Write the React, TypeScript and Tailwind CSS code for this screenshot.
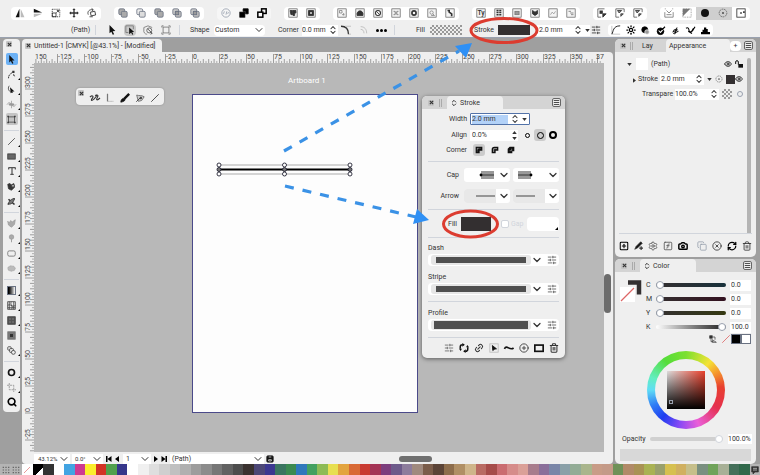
import type { ReactNode } from "react";
import { Camera, ChevronDown, ChevronsUpDown, CirclePlus, CircleX, Copy, Eye, Link2, Menu, RefreshCw, Search, Settings, SlidersHorizontal, SquareFunction, SquarePlus, Sun, Trash2, Type } from "lucide-react";

type IconProps = { name: string; className?: string };

const FRAME = <rect x="1" y="1" width="10" height="10" fill="#f4f4f4" strokeWidth="0.8" stroke="#555" />;

// Small glyphs, all on a 12 x 12 grid
const GLYPHS: Record<string, ReactNode> = {
  flipH: (<><path d="M5.3 1v10H.8z" fill="#111" stroke="none" /><path d="M6.8 1v10h4.5z" fill="#bbb" stroke="none" /></>),
  flipV: (<><path d="M1 1v4.5h10z" fill="#111" stroke="none" /><path d="M1 11V7h10z" fill="#bbb" stroke="none" /></>),
  scale: (<><rect x="1.5" y="1.5" width="9" height="9" strokeDasharray="1.5 1" /><rect x="1.5" y="6" width="4.5" height="4.5" /><path d="M6.5 5.5 9 3M7 3h2v2" /></>),
  move: (<><path d="M6 1v10M1 6h10" strokeWidth="1.6" /><path d="m4 2.5 2-2 2 2M4 9.5l2 2 2-2M2.5 4l-2 2 2 2M9.5 4l2 2-2 2" fill="currentColor" stroke="none" /></>),
  rotate: (<><rect x="4.5" y="4.5" width="5.5" height="4.5" transform="rotate(-12 7 7)" /><path d="M1.5 8C0 4 3 1.5 7 2M5.5 .5 7.5 2 6 4M3 10.5h4" /></>),
  unite: (<><rect x="1" y="1" width="7" height="7" rx="1.5" fill="#aaa" /><rect x="4" y="4" width="7" height="7" rx="1.5" fill="#aaa" /></>),
  subtract: (<><rect x="1" y="1" width="7" height="7" rx="1.5" fill="#eee" /><rect x="4" y="4" width="7" height="7" rx="1.5" fill="#ddd" /></>),
  intersect: (<><rect x="1" y="1" width="7" height="7" rx="1.5" fill="#ccc" /><rect x="4" y="4" width="7" height="7" rx="1.5" fill="#bbb" /><rect x="4" y="4" width="4" height="4" fill="#999" /></>),
  ring: (<><circle cx="6" cy="6" r="5" /><path d="m3 7 1-3M6 8l1-4M8 7l1-2" /></>),
  front: (<><path d="M5 1h6v6H8V4H5z" fill="currentColor" /><rect x="1" y="5" width="6" height="6" fill="currentColor" /></>),
  back: (<><rect x="5.5" y="1" width="5.5" height="5.5" strokeWidth="1.8" /><rect x="1" y="5" width="6" height="6" fill="#fff" strokeWidth="1.8" /></>),
  frameFlag: (<>{FRAME}<path d="M2.5 3h3v5h-2zM6 3h3.5v3H8v3H6z" fill="currentColor" /></>),
  frameDown: (<>{FRAME}<path d="M3 3h6v6H3z" fill="currentColor" /><path d="M5 5h2v2H5z" fill="#fff" stroke="none" /></>),
  frameGrid: (<>{FRAME}<path d="M3 3h3v3H3zM6 8h3M8 6v3" stroke="#888" /></>),
  frameCar: (<>{FRAME}<path d="M2.5 9V6l2-2.5h3l2 2.5v3z" fill="currentColor" /></>),
  frameBan: (<>{FRAME}<circle cx="6" cy="6" r="3" strokeWidth="1.3" /><path d="m4 4 4 4" /></>),
  frameAlign: (<>{FRAME}<path d="M3 4h2v4H3M9 4H7v4h2M5 6h2" stroke="#777" /></>),
  frameRing: (<>{FRAME}<circle cx="6" cy="6" r="2.5" strokeWidth="2" /></>),
  frameLoop: (<>{FRAME}<circle cx="5.5" cy="5.5" r="2" stroke="#888" /><path d="M7 7l2 2H5" stroke="#888" /></>),
  frameSteps: (<>{FRAME}<path d="M3 3h2v2l3 2v2h1" strokeWidth="2" /></>),
  frameTy: FRAME,
  frameText: (<>{FRAME}<path d="M3 3h6M3 5.5h6M3 8h6" strokeWidth="1.8" strokeDasharray="2.5 .8" /></>),
  frameBox: (<>{FRAME}<rect x="3.5" y="4" width="5" height="4" fill="#999" stroke="#777" /></>),
  frameMask: (<>{FRAME}<path d="M3 3l3 2 3-2v4L6 9 3 7z" fill="currentColor" /></>),
  frameLight: (<>{FRAME}<path d="M3 8l2-3 2 2 2-3" stroke="#999" /></>),
  frameBars: (<>{FRAME}<path d="M3 4h3M5 6h4M6 8h3" stroke="#777" /></>),
  frameDot: (<><path d="M9 1H1v10h4" strokeWidth=".8" /><rect x="3" y="3" width="4" height="4" fill="currentColor" stroke="none" /><path d="M7 7h4L7 11z" fill="currentColor" /></>),
  frameTri: (<><path d="M11 5V1H1v10h4" strokeWidth=".8" /><path d="M3 3h5L5 6zM7 7h3L7 10z" fill="#888" /></>),
  smile: (<><path d="M1 1h1M10 1h1M1 11h10V5M1 5v6" stroke="#777" /><path d="M3 3l3 3 3-3M3 8h6" stroke="#777" /></>),
  half: (<><rect x="1" y="1" width="10" height="10" strokeDasharray="1 1" stroke="#888" /><path d="M10 1 1 10V1z" fill="#777" stroke="none" /></>),
  disc: <circle cx="6" cy="6" r="4.8" fill="#111" stroke="none" />,
  target: (<><circle cx="6" cy="6" r="4.6" stroke="#666" strokeDasharray="2 .8" /><circle cx="6" cy="6" r="1.3" fill="#555" stroke="none" /></>),
  frameEnd: (<><rect x="1" y="1" width="10" height="10" /><path d="M5 5h2v2H5zM8.5 4h2v2h-2z" fill="currentColor" stroke="none" /></>),
  pointer: <path d="M3 0l7 7.2-3.2.2 1.8 3.6-1.7.8-1.7-3.8L3 10z" fill="#111" stroke="none" />,
  pointerBox: (<><path d="M4 9H1V1h9v4" stroke="#777" /><path d="M5 3l6 5.5H8.6l1.3 2.6-1.2.6-1.3-2.8L5 11z" fill="#111" stroke="none" /></>),
  pointerCircle: (<><path d="M1 3l5-2 5 2M1 3v5c1 3 3 3 4 3" stroke="#777" /><circle cx="7.5" cy="6.5" r="3" stroke="#555" /><path d="M6 5l5 5-2 1" /></>),
  boundBox: (<><rect x="2.5" y="2.5" width="7" height="7" stroke="#777" /><path d="M1 1h2M9 1h2M1 11h2M9 11h2M1 1v2M11 1v2M1 9v2M11 9v2" stroke="#777" /></>),
  arc: (<><path d="M0 1.5c6 0 9 3 9 9.5" strokeWidth="1.6" /><path d="M5 1.5h7M9 11h3" stroke="#bbb" /></>),
  arcs: (<><path d="M1 1c6 0 9 4 9 10M1 5c3 0 5 2 5 6" stroke="#aaa" /></>),
  curve: (<><path d="M1 1v10h10" stroke="#bbb" /><path d="M1 11C3 8 2 1 11 1" /></>),
  bulb: (<><circle cx="5" cy="5" r="4" fill="currentColor" /><circle cx="8" cy="8" r="3" fill="#999" stroke="#eee" /></>),
  dial: (<><circle cx="6" cy="7" r="4.5" fill="currentColor" /><path d="M3.5 6l2.5 2.5 6-7" stroke="#fff" strokeWidth="1.4" /><path d="m8 5 4-4" strokeWidth="1.5" /></>),
  hash: <path d="m2 8 7-3M3 10l7-3M5 11l3-9M3 6l4-2" strokeWidth="1.3" />,
  quill: <path d="M0 3c3-2 4 1 4 3s3 3 5 0l3-5M3 7l5 3M7 8l3-5" strokeWidth="1.5" />,
  hills: <path d="M0 11V8h2V5h2V2h3v2h2v4h3v3z" fill="currentColor" stroke="none" />,
  node: (<><path d="M2 11c0-4 2-6 6-8" strokeDasharray="2 .6" strokeWidth="1.3" /><path d="M7 1h3v3H7zM9 5l2 4-3-2z" fill="currentColor" stroke="none" /></>),
  nodeCurve: (<><path d="M3 1C0 5 3 10 8 10" /><path d="M4 3l6 5.5H7.5L5 11z" fill="#111" stroke="none" /></>),
  warp: (<><path d="M0 6c2-3 4-3 6 0s4 3 6 0" stroke="#888" /><ellipse cx="6" cy="6" rx="4" ry="1.8" fill="#999" stroke="none" /><path d="M6 1v10" stroke="#999" /></>),
  artboard: (<><rect x="2" y="2.5" width="8" height="7" strokeWidth="1.2" stroke="#555" /><path d="M.5 1h2v2h-2zM9.5 1h2v2h-2zM.5 9h2v2h-2zM9.5 9h2v2h-2z" fill="#333" stroke="none" /></>),
  line: <path d="M1.5 10.5l9-9" />,
  rect: <rect x="1" y="2.5" width="10" height="7" fill="#666" />,
  shape: (<><path d="M1 3l3-1 2 2 3-2 1 5-4 4-4-2z" fill="#333" /><circle cx="8" cy="5" r="2" fill="#aaa" /></>),
  cross: (<><path d="M1 10l9-8M2 3l8 7" strokeWidth="2.2" /><path d="M2 9c3 2 7-2 8-7-4 0-8 4-8 7" fill="#777" /></>),
  cloud: <path d="M1 3l2 2 2-3 2 2 4-3-1 6-4 4-4-3z" fill="#aaa" stroke="#999" />,
  pin: (<><circle cx="6" cy="4" r="3" fill="#aaa" stroke="#999" /><path d="M6 7v4" stroke="#888" /></>),
  roundBox: <rect x="1" y="2.5" width="10" height="7" rx="2" stroke="#666" />,
  blob: <ellipse cx="6" cy="6" rx="5" ry="3.6" fill="#bbb" stroke="#999" strokeDasharray="1 1" />,
  mesh: (<><rect x="1" y="1" width="10" height="10" /><path d="M1 6c3-3 6 3 10 0M6 1c-3 3 3 6 0 10M3 1v10M9 1v10M1 9h10" /></>),
  tile: (<><rect x="1" y="1" width="10" height="10" fill="#555" /><path d="M3 3h2v2H3zM7 3h2v2H7zM3 7h2v2H3zM7 7h2v2H7z" fill="#777" stroke="none" /></>),
  tileDot: (<><rect x="1" y="1" width="10" height="10" fill="#777" stroke="#777" /><path d="M4 4h4v4H4z" fill="#333" stroke="none" /></>),
  blend: (<><rect x="1" y="1" width="4.5" height="4.5" rx="1" /><rect x="3.5" y="3.5" width="5" height="5" rx="1" fill="#eee" /><circle cx="8.5" cy="8.5" r="2.6" fill="#eee" /></>),
  lens: <circle cx="6" cy="6" r="4" strokeWidth="2.2" stroke="#111" />,
  crop: <path d="M3 0v9h9M0 3h9v9" stroke="#888" strokeDasharray="3 1" />,
  scribble: <path d="M0 5c2-3 5-1 3 1s-2 4 1 2 3-5 5-5-2 4-1 5 3-1 4-2M6 3l3-1" strokeWidth="1.3" />,
  penLine: (<><path d="M3 1v9h7" stroke="#999" strokeDasharray="1.5 1" /><path d="M3 1v9" strokeWidth="1.5" stroke="#777" /></>),
  brush: (<><path d="M11 1 5 7" strokeWidth="2.8" stroke="#111" /><path d="M1 11c0-3 2-5 4-4s1 3-4 4" fill="#111" stroke="#111" /></>),
  pen: (<><path d="M2 2.5c3 1 6 0 9 2L8 9l-4 1z" fill="#ccc" stroke="#666" /><path d="M1.5 10.5 6 6" /><circle cx="7" cy="6" r="1" fill="#333" /></>),
  dotsGrid: <path d="M1 2h2M5 2h2M9 2h2M1 6h2M5 6h2M9 6h2M1 10h2M5 10h2M9 10h2" strokeWidth="1.8" />,
  cornerMiter: (<><path d="M1 1h10v6H7v4H1z" fill="#111" stroke="none" /><path d="M3 3.5h6M3.5 3v6" stroke="#ccc" strokeDasharray="1 1" /></>),
  cornerRound: (<><path d="M1 11V5q0-4 4-4h6v6H7v4z" fill="#111" stroke="none" /><path d="M4 9V4h5" stroke="#ddd" /></>),
  cornerBevel: (<><path d="M1 11V4l3-3h7v7H8v3z" fill="#111" stroke="none" /><path d="M4 7h3V4" stroke="#999" /></>),
  cursorBox: (<><rect x="1" y="1" width="10" height="10" stroke="#bbb" /><path d="M4 3l5 4-2 .3L4.5 9z" fill="#111" stroke="#111" /></>),
  wave: <path d="M.5 7c3-6 6 3 11-1" strokeWidth="2" stroke="#111" />,
  box: <rect x="1" y="2.5" width="10" height="7.5" strokeWidth="2" stroke="#111" />,
  pencilPlus: (<><path d="M1 11l2-4 6-6 2 2-6 6z" fill="#111" /><path d="M9.5 7v5M7 9.5h5" strokeWidth="1.6" /></>),
  refresh: (<><path d="M1.5 7V4.500q0-2.500 3-2.500M10.500 5v2.500q0 2.500-3 2.500" strokeWidth="1.800" stroke="#111" /><path d="M4 0l3 2-3 2.500zM8 7.500v4.500L5 10zM0 7h3.500L2 9.500zM8.500 5h3.500l-2-2.500z" fill="#111" stroke="none" /></>),
  swap: (<><path d="M1 1h4v4H1z" fill="currentColor" /><path d="M3 6v4h4M6 3h3v4M5 7l6 4H5z" /></>),
  chat: (<><path d="M1 1h10v8H6l-3 3V9H1z" fill="#333" /><path d="M3 3.5h6M3 6h6" stroke="#ddd" /></>),
  disk: (<><rect x="1" y="1" width="10" height="10" rx="2" fill="#111" /><path d="M4 3h4M4 7h4v2H4z" stroke="#fff" /></>),
  unlock: (<><path d="M1 6V3q0-2 2-2t2 2v4" strokeWidth="1.5" stroke="#111" /><rect x="5" y="6" width="7" height="5.5" fill="#111" stroke="none" /></>),
};

function Glyph({ name, className = "size-2.5" }: IconProps) {
  return (
    <svg viewBox="0 0 12 12" className={`shrink-0 overflow-visible ${className}`} fill="none" stroke="currentColor" strokeWidth="1">
      {GLYPHS[name]}
      {name === "frameTy" && (
        <text x="6" y="8.8" textAnchor="middle" fontSize="8" fontWeight="600" fill="#333" stroke="none">Ty</text>
      )}
    </svg>
  );
}

const TOP_GROUPS = [
  ["flipH", "flipV", "scale", "move", "rotate"],
  ["unite", "subtract", "unite", "intersect", "intersect"],
  ["ring", "front", "back"],
  ["frameFlag", "frameDown"],
  ["frameGrid", "frameCar", "frameBan", "frameAlign", "frameRing", "frameLoop", "frameSteps"],
  ["frameTy", "frameText", "frameBox", "frameMask", "frameLight", "frameBars"],
  ["frameDot", "frameTri", "frameTri"],
  ["smile", "half", "disc", "target", "frameEnd"],
];

function IconButton({ name, className = "", icon }: IconProps & { icon?: string }) {
  return (
    <button type="button" aria-label={name} className={`flex shrink-0 items-center justify-center ${className}`}>
      <Glyph name={name} className={icon} />
    </button>
  );
}

function TopBar() {
  return (
    <div className="flex h-6 items-center gap-[13px] pt-0.5 pl-[11px]">
      {TOP_GROUPS.map((group, g) => (
        <div key={g} className={`flex shrink-0 overflow-hidden rounded-sm ${g === 1 ? "bg-white text-gray-500" : g === 2 ? "bg-[#f6f6f6]" : "bg-white"}`}>
          {group.map((name, i) => (
            <IconButton
              key={i}
              name={name}
              className={`h-[13px] w-[18px] ${name === "disc" || name === "target" ? "bg-[#cfcfcf]" : ""} ${name === "ring" ? "text-gray-400" : ""} ${name === "front" || name === "back" ? "text-black" : ""}`}
            />
          ))}
        </div>
      ))}
    </div>
  );
}

function Steppers() {
  return <ChevronsUpDown className="size-2.5 shrink-0" strokeWidth={2.5} />;
}

function Caret() {
  return (
    <svg viewBox="0 0 6 4" className="h-[3px] w-[5px] shrink-0" fill="currentColor">
      <path d="M0 0h6L3 4z" />
    </svg>
  );
}

function Checker({ className = "" }: { className?: string }) {
  return (
    <div className={`bg-[repeating-conic-gradient(#999_0_25%,#eee_0_50%)] bg-[length:4px_4px] ${className}`} />
  );
}

const input = "min-w-0 bg-white outline-none";

function PropertyBar() {
  return (
    <div className="flex h-3 items-center pl-[71px]">
      <span className="w-[18px] shrink-0">(Path)</span>
      <i className="ml-1.5 h-2.5 w-px bg-gray-300" />
      <div className="ml-[7px] flex shrink-0">
        <IconButton name="pointer" className="h-3 w-[18px]" />
        <IconButton name="pointerBox" className="mx-[3px] h-3 w-3 rounded-sm bg-[#c8c8c8]" />
        <IconButton name="pointerCircle" className="h-3 w-[18px]" />
        <IconButton name="boundBox" className="h-3 w-[18px]" />
      </div>
      <i className="ml-1 h-2.5 w-px bg-gray-300" />
      <label className="ml-[10px] w-6 shrink-0" htmlFor="shape">Shape</label>
      <div className="flex h-[11px] w-[51px] shrink-0 items-center justify-between rounded-sm bg-white pl-px">
        <select id="shape" className="appearance-none bg-transparent outline-none"><option>Custom</option></select>
        <ChevronDown className="size-3" />
      </div>
      <label className="ml-[13px] w-6 shrink-0" htmlFor="corner">Corner</label>
      <div className="flex h-[11px] w-[36px] shrink-0 items-center bg-white">
        <input id="corner" className={`${input} w-[26px]`} defaultValue="0.0 mm" />
        <Steppers />
      </div>
      <IconButton name="arc" className="ml-0.5 h-3 w-3" />
      <IconButton name="arcs" className="ml-[6px] h-3 w-3" icon="size-2" />
      <button type="button" aria-label="More" className="ml-1 flex h-3 w-[14px] items-center justify-center gap-px">
        <i className="size-[3px] rounded-full bg-black" />
        <i className="size-[3px] rounded-full bg-black" />
        <i className="size-[3px] rounded-full bg-black" />
      </button>
      <i className="ml-[6px] h-2.5 w-px bg-gray-300" />
      <span className="ml-[21px] w-[14px] shrink-0">Fill</span>
      <Checker className="h-[10px] w-8 shrink-0" />
      <span className="ml-[12px] w-6 shrink-0">Stroke</span>
      <button type="button" aria-label="Stroke color" className="h-[10px] w-8 shrink-0 bg-[#332f30]" />
      <div className="ml-[7px] flex h-[11px] w-[53px] shrink-0 items-center gap-0.5 bg-white pl-0.5">
        <input aria-label="Stroke width" className={`${input} w-8`} defaultValue="2.0 mm" />
        <Steppers />
        <Caret />
      </div>
      <SlidersHorizontal className="ml-px size-[10px] shrink-0" />
      <div className="ml-[7px] flex shrink-0 rounded-sm bg-white text-black">
        <IconButton name="curve" className="h-3 w-[15px]" icon="size-2.5" />
        <button type="button" aria-label="Brightness" className="flex h-3 w-[15px] items-center justify-center"><Sun className="size-2.5" strokeWidth={3} /></button>
        {["bulb", "dial", "hash", "quill", "hills"].map((n) => (
          <IconButton key={n} name={n} className="h-3 w-[15px]" icon="size-[9px]" />
        ))}
      </div>
    </div>
  );
}

const TOOLS = [
  ["pointer", "node", "nodeCurve", "warp", "artboard"],
  ["line", "rect", "type", "shape", "cross"],
  ["cloud", "pin", "roundBox", "blob"],
  ["gradient", "mesh", "tile", "tileDot", "blend"],
  ["lens", "crop", "search"],
];

function Close() {
  return (
    <button type="button" aria-label="Close" className="flex size-[6px] shrink-0 items-center justify-center rounded-[1px] bg-[#c4c4c4] text-[#333]">
      <svg viewBox="0 0 6 6" className="size-[5px]" stroke="currentColor" strokeWidth="1.3"><path d="m1 1 4 4M5 1 1 5" /></svg>
    </button>
  );
}

function ToolPalette() {
  return (
    <aside className="flex w-[17px] shrink-0 flex-col self-start rounded-[4px] bg-[#efefef] pb-1">
      <div className="flex h-[14px] items-start pt-0.5 pl-[3px]"><Close /></div>
      {TOOLS.map((group, g) => (
        <div key={g} className={`mx-px flex flex-col items-center gap-[3px] ${g > 0 ? "mt-[5px] border-t border-gray-300 pt-[4px]" : ""}`}>
          {group.map((name) => (
            <button
              key={name}
              type="button"
              aria-label={name}
              className={`relative flex h-3 w-3 items-center justify-center rounded-[2px] ${name === "pointer" ? "bg-[#6cb1f5]" : name === "artboard" ? "bg-[#c4c4c4]" : ""}`}
            >
              {name === "type" && <Type className="size-2.5 text-[#555]" strokeWidth={3} />}
              {name === "search" && <Search className="size-2.5 text-black" strokeWidth={4} />}
              {name === "gradient" && <i className="size-[9px] border border-gray-500 bg-linear-to-r from-black to-white" />}
              {GLYPHS[name] && <Glyph name={name} className="size-[9px]" />}
              {name !== "pointer" && name !== "search" && name !== "tileDot" && name !== "artboard" && (
                <i className="absolute -right-0.5 bottom-0 border-b-2 border-l-2 border-b-black border-l-transparent" />
              )}
            </button>
          ))}
        </div>
      ))}
    </aside>
  );
}

const SCALE = 1.08;
const range = (from: number, to: number) => Array.from({ length: to - from + 1 }, (_, i) => from + i);

function HorizontalRuler() {
  return (
    <svg className="ml-[12px] h-[11px] w-[572px] shrink-0" fontSize="7" fill="#444" role="img" aria-label="Horizontal ruler">
      {range(-29, 75).map((n) => (
        <line key={n} x1={158.5 + n * 5 * SCALE} x2={158.5 + n * 5 * SCALE} y1={n % 5 === 0 ? 2 : 7} y2="11" stroke="#888" strokeWidth="0.8" />
      ))}
      {range(-29, 75).map((n) => (
        <line key={n} x1={161.2 + n * 5 * SCALE} x2={161.2 + n * 5 * SCALE} y1="9" y2="11" stroke="#999" strokeWidth="0.8" />
      ))}
      {range(-6, 15).map((n) => (
        <text key={n} x={n === -6 ? 1 : n === 15 ? 562 : 159 + n * 25 * SCALE} y="7">{n === -6 ? "150" : n === 15 ? "37" : n * 25}</text>
      ))}
    </svg>
  );
}

function VerticalRuler() {
  return (
    <svg className="h-[390px] w-[12px] shrink-0" fontSize="7" fill="#444" role="img" aria-label="Vertical ruler">
      {range(-7, 64).map((n) => (
        <line key={n} y1={350 - n * 5 * SCALE} y2={350 - n * 5 * SCALE} x1={n % 5 === 0 ? 3 : 8} x2="12" stroke="#888" strokeWidth="0.8" />
      ))}
      {range(-7, 64).map((n) => (
        <line key={n} y1={347.3 - n * 5 * SCALE} y2={347.3 - n * 5 * SCALE} x1="10" x2="12" stroke="#999" strokeWidth="0.8" />
      ))}
      {range(-1, 12).map((n) => (
        <text key={n} transform={`translate(8 ${349 - n * 25 * SCALE}) rotate(-90)`}>{n * 25}</text>
      ))}
    </svg>
  );
}

function MenuButton() {
  return (
    <button type="button" aria-label="Panel menu" className="flex size-[9px] shrink-0 items-center justify-center rounded-[2px] border border-[#666] bg-[#efefef]">
      <Menu className="size-[7px]" strokeWidth={3} />
    </button>
  );
}

function Grip() {
  return <i className="h-2 w-[3px] shrink-0 border-x border-[#aaa]" />;
}

function PanelTitle({ title }: { title: string }) {
  return (
    <div className="flex h-[13px] shrink-0 items-center gap-[5px] bg-[#d4d4d4] pr-1 pl-[6px]">
      <Close />
      <Grip />
      <div className="flex h-full w-[56px] items-center gap-0.5 rounded-t-[4px] bg-[#efefef] pl-[3px]">
        <ChevronsUpDown className="size-2" strokeWidth={3} />
        <span>{title}</span>
      </div>
      <div className="ml-auto flex"><MenuButton /></div>
    </div>
  );
}

function ProfileRow({ label, wide }: { label: string; wide?: boolean }) {
  return (
    <div className="flex flex-col gap-px">
      <span className="h-[10px] leading-[10px]">{label}</span>
      <div className="flex h-[12px] items-center rounded-sm bg-white pr-0.5 pl-[3px]">
        <div className={`flex h-[10px] w-[100px] items-center rounded-[3px] bg-[#e6e6e6] ${wide ? "px-[3px]" : "px-[5px]"}`}>
          <i className={`w-full bg-[#4f4f4f] ${wide ? "h-[8px]" : "h-[6px]"}`} />
        </div>
        <ChevronDown className="size-3" strokeWidth={2.5} />
        <SlidersHorizontal className="ml-auto size-2.5 text-[#555]" />
      </div>
    </div>
  );
}

function LineSelect({ kind, label }: { kind: "capStart" | "capEnd" | "arrow" | "arrowEnd"; label: string }) {
  const cap = kind === "capStart" || kind === "capEnd";
  return (
    <button type="button" aria-label={label} className="flex h-[14px] w-[46px] items-center justify-between overflow-hidden rounded-[3px] bg-white">
      <svg viewBox="0 0 32 14" className="h-[14px] w-8">
        {cap ? (
          <>
            <rect x={kind === "capStart" ? 17 : 5} y="3" width="13" height="8" fill="#999" />
            <path d={kind === "capStart" ? "M17 7h13" : "M5 7h13"} stroke="#333" />
            <circle cx={kind === "capStart" ? 17 : 18} cy="7" r="1.4" />
          </>
        ) : (
          <>
            <rect width="32" height="14" fill="#e8e8e8" />
            <path d={kind === "arrow" ? "M12 7h19" : "M3 7h19"} stroke="#444" strokeWidth="1.2" />
          </>
        )}
      </svg>
      <ChevronDown className="size-3" strokeWidth={2.5} />
    </button>
  );
}

function StrokePanel() {
  const label = "w-[42px] shrink-0 pr-[3px] text-right";
  return (
    <section className="absolute top-[33px] left-[388px] w-[143px] overflow-hidden rounded-[5px] bg-[#efefef] shadow-[0_1px_4px_rgba(0,0,0,0.5)]">
      <PanelTitle title="Stroke" />
      <div className="flex flex-col px-[6px]">
        <div className="mt-[4px] flex h-3 items-center">
          <label htmlFor="width" className={label}>Width</label>
          <div className="flex h-3 w-[60px] items-center gap-0.5 rounded-[1px] border border-[#5272a8] bg-white pr-0.5 pl-px">
            <input id="width" className="h-[9px] w-10 min-w-0 bg-[#b3d2f8] outline-none" defaultValue="2.0 mm" />
            <Steppers />
            <Caret />
          </div>
        </div>
        <div className="mt-[4px] flex h-3 items-center">
          <label htmlFor="align" className={label}>Align</label>
          <div className="mr-[3px] flex h-[11px] w-[48px] items-center bg-white pl-0.5">
            <input id="align" className={`${input} w-10`} defaultValue="0.0%" />
            <span className="flex flex-col gap-[3px]"><span className="rotate-180"><Caret /></span><Caret /></span>
          </div>
          <button type="button" aria-label="Inside" className="flex size-3 items-center justify-center"><i className="size-[5px] rounded-full border border-black" /></button>
          <button type="button" aria-label="Center" className="mx-px flex size-3 items-center justify-center rounded-[3px] bg-[#ccc]"><i className="size-[7px] rounded-full border border-black" /></button>
          <button type="button" aria-label="Outside" className="flex size-3 items-center justify-center"><i className="size-2 rounded-full border-2 border-black" /></button>
        </div>
        <div className="mt-[3px] flex h-3 items-center">
          <span className={label}>Corner</span>
          <IconButton name="cornerMiter" className="ml-[3px] size-3 rounded-[3px] bg-[#ccc]" icon="size-2" />
          <IconButton name="cornerRound" className="ml-[4px] size-3" icon="size-2" />
          <IconButton name="cornerBevel" className="ml-[4px] size-3" icon="size-2" />
        </div>
        <hr className="mt-[5px] border-gray-300" />
        <div className="mt-[6px] flex h-[14px] items-center gap-[3px]">
          <span className="w-[33px] shrink-0 pr-0.5 text-right">Cap</span>
          <LineSelect kind="capStart" label="Start cap" />
          <LineSelect kind="capEnd" label="End cap" />
        </div>
        <div className="mt-[7px] flex h-[14px] items-center gap-[3px]">
          <span className="w-[33px] shrink-0 pr-0.5 text-right">Arrow</span>
          <LineSelect kind="arrow" label="Start arrow" />
          <LineSelect kind="arrowEnd" label="End arrow" />
        </div>
        <hr className="mt-[6px] border-gray-300" />
        <div className="mt-[7px] flex h-[14px] items-center">
          <span className="w-[33px] shrink-0 pr-1 text-right">Fill</span>
          <button type="button" aria-label="Stroke fill" className="h-[14px] w-[30px] bg-[#332f30]" />
          <label className="ml-[10px] flex items-center gap-0.5 text-gray-300">
            <input type="checkbox" className="size-2 appearance-none rounded-[2px] border border-gray-300 bg-white" />Gap
          </label>
          <div className="ml-auto flex h-[14px] w-8 items-end justify-end rounded-sm bg-white"><i className="mr-px mb-px border-b-[3px] border-l-[3px] border-b-black border-l-transparent" /></div>
        </div>
        <hr className="mt-[6px] mb-[5px] border-gray-300" />
        <ProfileRow label="Dash" />
        <div className="h-[6px]" />
        <ProfileRow label="Stripe" />
        <hr className="my-[6px] border-gray-300" />
        <ProfileRow label="Profile" wide />
        <hr className="mt-[6px] border-gray-300" />
        <div className="flex h-[20px] items-center justify-end gap-[5px]">
          <SlidersHorizontal className="size-2.5 text-[#666]" />
          <Glyph name="refresh" />
          <Link2 className="size-2.5 -rotate-45" strokeWidth={2.5} />
          <Glyph name="cursorBox" />
          <Glyph name="wave" />
          <CirclePlus className="size-2.5" />
          <Glyph name="box" />
          <Trash2 className="size-2.5" strokeWidth={2.5} />
        </div>
      </div>
    </section>
  );
}

function Canvas() {
  return (
    <div className="relative min-w-0 flex-1 overflow-hidden bg-[#b8b8b8]">
      <span className="absolute top-[12px] left-[254px] text-[8px] leading-3 text-white">Artboard 1</span>
      <div className="absolute top-[31px] left-[158px] h-[319px] w-[226px] border border-[#4b4a8a] bg-[#fdfdfd]">
        <svg viewBox="0 0 142 20" className="ml-[20px] mt-[64px] h-5 w-[142px]" fill="none" stroke="#223" strokeWidth="0.9">
          <path d="M6 6h131M6 15h131" stroke="#777" strokeWidth="0.6" />
          <path d="M6 10.5h131" stroke="#000" strokeWidth="2" />
          {[6, 71.5, 137].map((x) => [6, 10.5, 15].map((y) => (
            <circle key={`${x}-${y}`} cx={x} cy={y} r="2" fill={y === 10.5 ? "#777" : "#fff"} />
          )))}
        </svg>
      </div>
      <div className="absolute top-[25px] left-[42px] flex h-[17px] w-[88px] rounded-[4px] bg-[#efefef] pt-0.5 pl-0.5 shadow-[0_0_2px_#888]">
        <Close />
        <div className="flex items-center gap-[5px] pl-[6px]">
          {["scribble", "penLine", "brush", "pen", "line"].map((n) => <Glyph key={n} name={n} className="size-[10px]" />)}
        </div>
      </div>
      <StrokePanel />
    </div>
  );
}

function StatusBar() {
  return (
    <div className="flex h-3 items-center pt-px pl-3">
      <div className="flex h-[10px] w-[36px] shrink-0 items-center justify-between bg-white pl-1 text-[6px]"><span>43.12%</span><ChevronDown className="size-3" /></div>
      <div className="ml-0.5 flex h-[10px] w-[31px] shrink-0 items-center justify-between bg-white pl-[3px] text-[6px]"><span>0.0°</span><ChevronDown className="size-3" /></div>
      <svg viewBox="0 0 14 6" className="ml-[3px] h-[6px] w-[14px] shrink-0"><path d="M0 0h1.5v6H0zM5.5 0v6L1.5 3zM13 0v6L9 3z" /></svg>
      <div className="ml-[3px] flex h-[10px] w-7 shrink-0 items-center justify-between bg-white pl-[3px]"><span>1</span><ChevronDown className="size-3" /></div>
      <svg viewBox="0 0 14 6" className="ml-0.5 h-[6px] w-[14px] shrink-0"><path d="M1 0v6l4-3zM8.5 0v6l4-3zM12.5 0H14v6h-1.5z" /></svg>
      <div className="ml-[3px] flex h-[10px] w-[94px] shrink-0 items-center justify-between bg-white pl-0.5"><span>(Path)</span><ChevronDown className="size-3" /></div>
      <Glyph name="disk" className="ml-0.5 size-2" />
      <div className="ml-[125px] h-[6px] w-[33px] shrink-0 rounded-full bg-[#707070]" />
    </div>
  );
}

function DocumentWindow() {
  return (
    <main className="flex min-w-0 flex-1 flex-col">
      <div className="flex h-[13px] w-[140px] items-center gap-[3px] rounded-t-[4px] bg-[#efefef] pl-[3px] whitespace-nowrap">
        <Close />
        <span>Untitled-1 [CMYK] [@43.1%] - [Modified]</span>
      </div>
      <div className="flex min-h-0 flex-1 flex-col rounded-b-[4px] rounded-tr-[4px] bg-[#efefef]">
        <HorizontalRuler />
        <div className="flex min-h-0 flex-1 overflow-hidden">
          <VerticalRuler />
          <Canvas />
          <div className="w-[9px] shrink-0 pt-[211px]"><i className="block h-[39px] w-[7px] rounded-full bg-[#6c6c6c]" /></div>
        </div>
        <StatusBar />
      </div>
    </main>
  );
}

function AppearancePanel() {
  return (
    <section className="flex h-[218px] shrink-0 flex-col overflow-hidden rounded-[5px] bg-[#efefef]">
      <div className="flex h-[13px] shrink-0 items-center bg-[#d4d4d4] pr-[3px] pl-[5px]">
        <Close />
        <i className="ml-[4px]" /><Grip />
        <span className="ml-[9px] w-6">Lay</span>
        <div className="flex h-full w-[64px] items-center justify-start rounded-t-[4px] bg-[#efefef] pl-[3px]">Appearance</div>
        <button type="button" aria-label="Add tab" className="ml-auto flex h-[10px] w-[11px] items-center justify-center rounded-sm bg-white">+</button>
        <i className="w-[3px]" />
        <MenuButton />
      </div>
      <div className="flex min-h-0 flex-1 pt-[6px]">
        <div className="flex flex-1 flex-col gap-[3px] pl-3">
          <div className="flex h-3 items-center">
            <Caret />
            <i className="ml-[4px] size-3 bg-white" />
            <span className="ml-[3px]">(Path)</span>
            <Eye className="mr-px ml-auto size-2" strokeWidth={3} />
            <Glyph name="unlock" className="ml-0.5 size-2" />
          </div>
          <div className="flex h-3 items-center">
            <span className="ml-[4px] w-[7px] -rotate-90"><Caret /></span>
            <label htmlFor="app-stroke" className="w-[21px]">Stroke</label>
            <div className="ml-px flex h-[11px] w-[44px] items-center bg-white pl-px">
              <input id="app-stroke" className={`${input} w-[34px]`} defaultValue="2.0 mm" /><Steppers />
            </div>
            <span className="ml-[3px]"><Caret /></span>
            <span className="ml-[3px] flex"><Glyph name="target" className="size-2" /></span>
            <button type="button" aria-label="Stroke color" className="ml-[3px] size-[9px] shrink-0 bg-[#332f30]" />
            <Eye className="ml-auto size-2" strokeWidth={3} />
          </div>
          <div className="flex h-3 items-center">
            <label htmlFor="transparency" className="ml-[15px] w-[33px]">Transpare</label>
            <div className="flex h-[11px] w-[44px] items-center bg-white">
              <input id="transparency" className={`${input} w-[34px]`} defaultValue="100.0%" /><Steppers />
            </div>
            <Checker className="ml-[3px] size-[10px]" />
            <i className="ml-auto size-[6px] rounded-full border border-gray-400" />
          </div>
        </div>
        <i className="mr-[5px] ml-[4px] w-[5px] rounded-t-sm bg-[#b4b4b4]" />
      </div>
      <div className="mx-1 flex h-[24px] shrink-0 items-center justify-between border-t border-gray-300">
        <SquarePlus className="size-2.5 text-black" strokeWidth={2.5} />
        <Glyph name="pencilPlus" className="size-[9px]" />
        <Settings className="size-2.5 text-[#555]" />
        <SquareFunction className="size-2.5 text-[#555]" />
        <Camera className="size-2.5 text-black" strokeWidth={3.5} />
        <Copy className="ml-1 size-2.5 text-gray-400" />
        <CircleX className="size-2.5" />
        <RefreshCw className="size-2.5 text-black" strokeWidth={3} />
        <Trash2 className="size-2.5" />
      </div>
    </section>
  );
}

const CHANNELS = [
  { name: "C", value: "0.0", bar: "bg-linear-to-r from-[#332f30] to-[#17303a]", knob: "left-0" },
  { name: "M", value: "0.0", bar: "bg-linear-to-r from-[#332f30] to-[#32101f]", knob: "left-0" },
  { name: "Y", value: "0.0", bar: "bg-linear-to-r from-[#332f30] to-[#34380f]", knob: "left-0" },
  { name: "K", value: "100.0", bar: "bg-linear-to-r from-white to-[#222]", knob: "right-0" },
];

function ColorWheel() {
  return (
    <div className="mx-auto mt-[7px] flex size-[78px] shrink-0 items-center justify-center rounded-full bg-[conic-gradient(#7be02f,#f5e236_40deg,#f59a2e_60deg,#e8402f_85deg,#e5304f_120deg,#ea5fd8_160deg,#8a4af5_190deg,#1f3df0_220deg,#2f7df5_245deg,#5fdcf5_270deg,#62eec0_290deg,#55dd3a_325deg,#7be02f)]">
      <div className="flex size-[62px] items-center justify-center rounded-full bg-[#efefef]">
        <div className="relative size-[38px] bg-[linear-gradient(to_top,#000,transparent),linear-gradient(to_right,#ddd,#e8402c)]">
          <i className="absolute bottom-[5px] left-0.5 size-1 border border-gray-400" />
        </div>
      </div>
    </div>
  );
}

function ColorPanel() {
  return (
    <section className="mt-0.5 flex min-h-0 flex-1 flex-col overflow-hidden rounded-[5px] bg-[#efefef]">
      <PanelTitle title="Color" />
      <div className="flex pt-[7px] pr-[5px] pl-[5px]">
        <svg viewBox="0 0 22 24" className="h-6 w-[22px] shrink-0">
          <path d="M8 3.5h11v12" fill="none" stroke="#332f30" strokeWidth="4.5" />
          <path d="M0 8h15v15H0z" fill="#fff" />
          <path d="M1 22 14 9" fill="none" stroke="#dd6666" strokeWidth="1.2" />
        </svg>
        <div className="flex flex-1 flex-col gap-0.5 pl-0.5">
          {CHANNELS.map((c) => (
            <div key={c.name} className="flex h-3 items-center">
              <span className="w-[9px] pl-0.5">{c.name}</span>
              <div className="relative mr-[4px] ml-[3px] flex h-2 flex-1 items-center">
                <i className={`h-[4px] w-full rounded-sm ${c.bar}`} />
                <i className={`absolute ${c.knob} size-2 rounded-full border border-gray-400 bg-white`} />
              </div>
              <input aria-label={c.name} className={`${input} h-[11px] w-[21px] pl-px`} defaultValue={c.value} />
            </div>
          ))}
        </div>
      </div>
      <div className="flex h-[11px] shrink-0 items-center justify-end pr-[5px]">
        <Glyph name="swap" className="mr-1 size-2" />
        <Glyph name="line" className="size-2.5 text-[#d66]" />
        <i className="size-[10px] border border-gray-500 bg-black" />
        <i className="size-[10px] border border-gray-500 bg-white" />
      </div>
      <ColorWheel />
      <div className="flex h-[20px] shrink-0 items-center pr-1 pl-[7px]">
        <span className="w-7">Opacity</span>
        <div className="relative flex flex-1 items-center">
          <i className="h-[4px] w-full rounded-sm bg-[#d0d0d0]" />
          <i className="absolute right-0 size-2 rounded-full border border-gray-300 bg-white" />
        </div>
        <input aria-label="Opacity" className={`${input} ml-[5px] h-[10px] w-[24px]`} defaultValue="100.0%" />
      </div>
      <i className="mx-[5px] h-3 shrink-0 bg-[#d8d8d8]" />
    </section>
  );
}

const SWATCHES = [
  "#333333", "#ffffff", "#42a4e2", "#ce3a91", "#fbee2b", "#d33426", "#51a04c", "#36378b", "#ffffff", "#f0f0f0", "#dedede", "#cfcfcf",
  "#c0c0c0", "#b0b0b0", "#9d9d9d", "#8c8c8c", "#777777", "#626262", "#4d4d4d", "#3a3230", "#4c4776", "#3b3790", "#3a7560", "#3b8a50",
  "#2f78bb", "#43a060", "#8dbb55", "#e7df50", "#e3a43e", "#d96a35", "#c93b32", "#a43355", "#7c3e7d", "#6d5a8a", "#8d7c9c", "#a08a7e",
  "#7b5d4a", "#5b4437", "#8d6d4c", "#b08f65", "#cfb58a", "#b96b63", "#a64c4a", "#ca6c70", "#d68c8a", "#dba098", "#a87c8c", "#8a6f9a",
  "#7a86a8", "#8aa0a8", "#93ac96", "#a9b58c", "#c89c87", "#c49a88", "#6f9158", "#b18a68", "#a99255", "#a9b253", "#99a06c", "#d6c050",
  "#d0b060", "#c6bf8a", "#7a9080", "#70a35a", "#a7b096", "#45705a", "#31694b",
];

function SwatchStrip() {
  return (
    <footer className="flex h-[11px] shrink-0 bg-[#b4b4b4]">
      <div className="flex w-[22px] shrink-0 items-center gap-0.5 pl-0.5 text-[#666]"><Glyph name="dotsGrid" className="size-2" /><Glyph name="dotsGrid" className="size-2" /></div>
      <button type="button" aria-label="None" className="flex flex-1 items-center justify-center bg-white text-[#d66]"><Glyph name="line" className="size-2" /></button>
      <button type="button" aria-label="Registration" className="flex-1 bg-linear-135 from-black from-65% to-white to-65%" />
      {SWATCHES.map((color, i) => (
        <button key={i} type="button" aria-label={color} className="flex-1" style={{ backgroundColor: color }} />
      ))}
      <div className="flex w-[10px] shrink-0 items-center justify-center"><Glyph name="chat" className="size-2" /></div>
    </footer>
  );
}

// Arrows and rings drawn over the workspace
function Annotations() {
  return (
    <svg viewBox="0 0 760 475" className="pointer-events-none absolute top-0 left-0 h-[475px] w-[760px]" fill="none">
      <g stroke="#3b92e6" strokeWidth="3.2">
        <path d="M284 151 459 51" strokeDasharray="9 9" />
        <path d="M285 186 416 217" strokeDasharray="9 9" />
      </g>
      <path d="M472 43 466 58 455 46z" fill="#2f90f5" />
      <path d="M429 220 413 224 417 209z" fill="#2f90f5" />
      <g stroke="#dc3c30" strokeWidth="3">
        <ellipse cx="504" cy="30.5" rx="33" ry="12" />
        <ellipse cx="470.5" cy="224" rx="27" ry="13" />
      </g>
    </svg>
  );
}

export default function App() {
  return (
    <div className="relative flex h-screen flex-col overflow-hidden bg-[#9f9f9f] font-['Roboto',sans-serif] text-[7px] leading-[10px] text-[#333]">
      <header className="h-[38px] shrink-0 border-b border-gray-400 bg-[#efefef]">
        <TopBar />
        <PropertyBar />
      </header>
      <div className="flex min-h-0 flex-1 pt-px pr-1 pl-[3px]">
        <ToolPalette />
        <div className="w-0.5 shrink-0" />
        <DocumentWindow />
        <div className="ml-0.5 flex w-[141px] shrink-0 flex-col">
          <AppearancePanel />
          <ColorPanel />
        </div>
      </div>
      <SwatchStrip />
      <Annotations />
    </div>
  );
}
